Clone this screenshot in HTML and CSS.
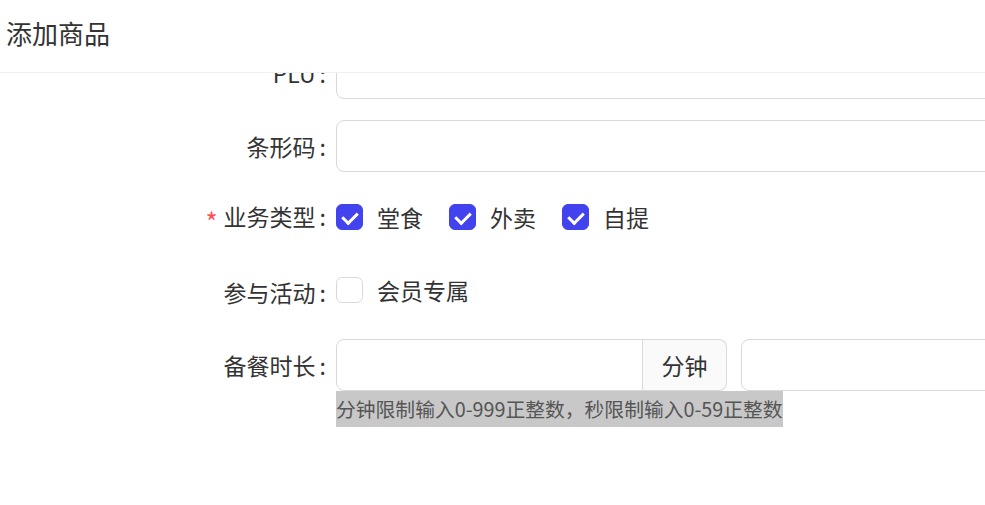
FILE: index.html
```html
<!DOCTYPE html>
<html lang="zh-CN">
<head>
  <meta charset="UTF-8" />
  <meta name="viewport" content="width=device-width, initial-scale=1.0" />
  <title>添加商品</title>
  <link rel="stylesheet" href="styles.css">
</head>
<body>
  <div class="modal">
    <div class="modal-header">
      <h2 class="modal-title">添加商品</h2>
    </div>

    <div class="modal-body">
      <form class="form">
        <!-- PLU -->
        <div class="form-row">
          <label class="form-label">PLU</label>
          <div class="form-control">
            <input class="input" type="text">
          </div>
        </div>

        <!-- 条形码 -->
        <div class="form-row">
          <label class="form-label">条形码</label>
          <div class="form-control">
            <input class="input" type="text">
          </div>
        </div>

        <!-- 业务类型 -->
        <div class="form-row">
          <label class="form-label required">业务类型</label>
          <div class="form-control checks">
            <label class="check"><span class="box checked"></span>堂食</label>
            <label class="check"><span class="box checked"></span>外卖</label>
            <label class="check"><span class="box checked"></span>自提</label>
          </div>
        </div>

        <!-- 参与活动 -->
        <div class="form-row">
          <label class="form-label">参与活动</label>
          <div class="form-control checks">
            <label class="check"><span class="box"></span>会员专属</label>
          </div>
        </div>

        <!-- 备餐时长 -->
        <div class="form-row top">
          <label class="form-label">备餐时长</label>
          <div class="form-control">
            <div class="time-group">
              <div class="input-group">
                <input class="input" type="text">
                <span class="addon">分钟</span>
              </div>
              <div class="input-group">
                <input class="input" type="text">
              </div>
            </div>
            <div class="help"><span>分钟限制输入0-999正整数，秒限制输入0-59正整数</span></div>
          </div>
        </div>
      </form>
    </div>
  </div>
</body>
</html>
```

FILE: styles.css
```css
* {
  box-sizing: border-box;
}
body {
  margin: 0;
  width: 985px;
  height: 505px;
  overflow: hidden;
  background: #fff;
  font-family: "Noto Sans CJK SC", "Noto Sans", sans-serif;
  color: #333;
}
.modal {
  width: 1300px;
  background: #fff;
}
.modal-header {
  height: 73px;
  display: flex;
  align-items: center;
  padding: 0 6px 8px;
  border-bottom: 1px solid #f0f0f0;
}
.modal-title {
  margin: 0;
  font-size: 26px;
  font-weight: 400;
  color: #333;
}
.modal-body {
  height: 432px;
  overflow: hidden;
}
.form {
  margin-top: -26px;
}
.form-row {
  display: flex;
  align-items: center;
  min-height: 52px;
  margin-bottom: 21px;
}
.form-row.top {
  align-items: flex-start;
}
.form-row.top .form-label {
  line-height: 52px;
}
.form-label {
  width: 326px;
  text-align: right;
  font-size: 23px;
  color: #333;
  white-space: nowrap;
}
.form-label::after {
  content: ":";
  margin-left: 4px;
}
.form-label.required::before {
  content: "*";
  color: #ff4d4f;
  margin-right: 6px;
  font-size: 26px;
  vertical-align: -6px;
}
.form-control {
  margin-left: 10px;
  flex: 1;
}
.input {
  display: block;
  width: 900px;
  height: 52px;
  border: 1px solid #d9d9d9;
  border-radius: 8px;
  font-size: 20px;
  padding: 0 12px;
  outline: none;
  background: #fff;
}
.checks {
  display: flex;
  align-items: center;
  gap: 26px;
  margin-top: -4px;
}
.check {
  display: flex;
  align-items: center;
  gap: 14px;
  font-size: 23px;
  color: #333;
}
.box {
  width: 27px;
  height: 26px;
  border: 1px solid #d9d9d9;
  border-radius: 6px;
  background: #fff;
  position: relative;
}
.box.checked {
  background: #4242ee;
  border-color: #4242ee;
}
.box.checked::after {
  content: "";
  position: absolute;
  left: 8px;
  top: 4px;
  width: 7px;
  height: 12px;
  border: solid #fff;
  border-width: 0 3px 3px 0;
  transform: rotate(45deg);
}
.time-group {
  display: flex;
  gap: 14px;
}
.input-group {
  display: flex;
}
.input-group .input {
  width: 307px;
  border-radius: 8px 0 0 8px;
}
.input-group .input:only-child {
  border-radius: 8px;
}
.addon {
  width: 84px;
  height: 52px;
  display: flex;
  align-items: center;
  justify-content: center;
  background: #fafafa;
  border: 1px solid #d9d9d9;
  border-left: 0;
  border-radius: 0 8px 8px 0;
  font-size: 23px;
  color: #333;
}
.help span {
  display: inline-block;
  background: #c8c8c8;
  color: #555;
  font-size: 19.8px;
  line-height: 36px;
  height: 36px;
}
```
